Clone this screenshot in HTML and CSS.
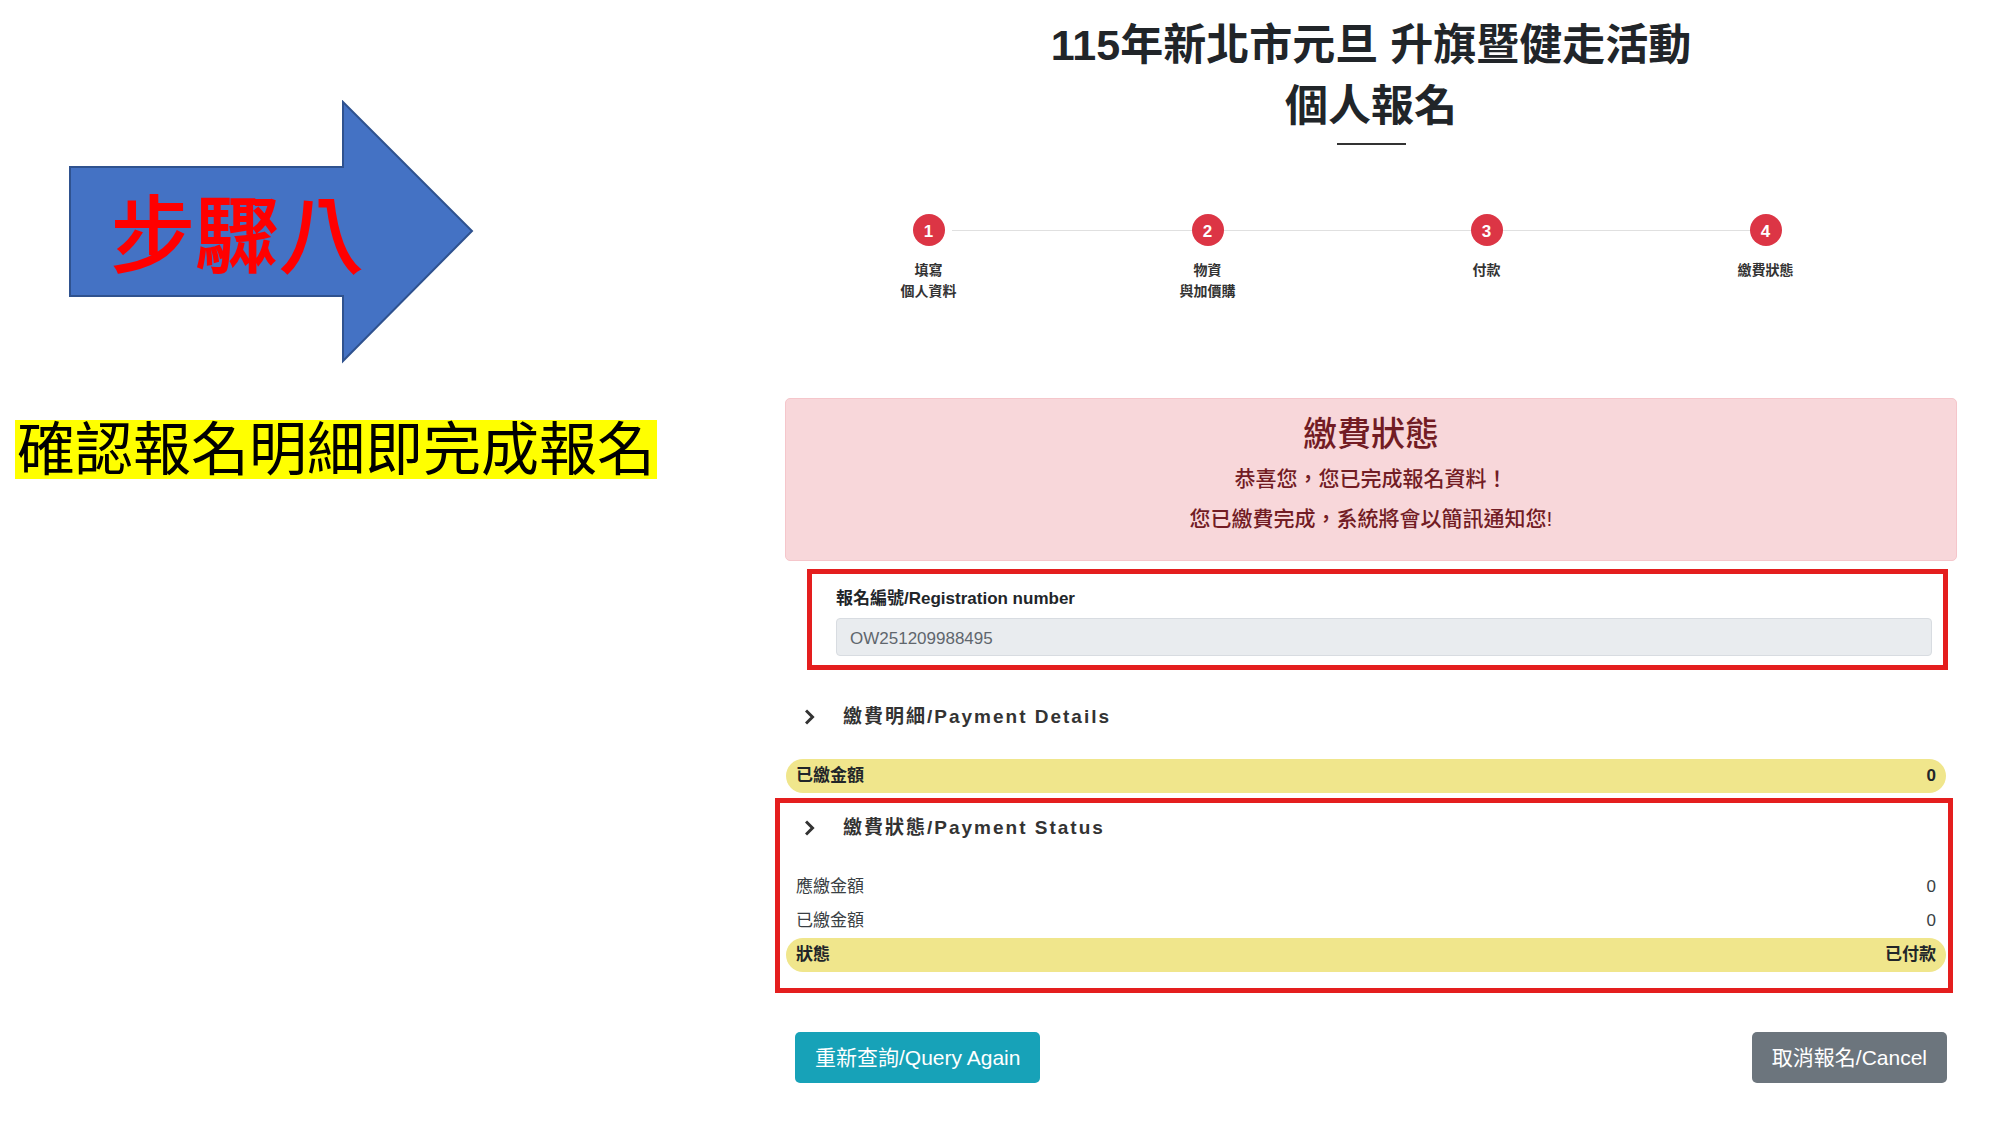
FILE: index.html
```html
<!DOCTYPE html>
<html lang="zh-Hant">
<head>
  <meta charset="UTF-8">
  <meta name="viewport" content="width=device-width, initial-scale=1">
  <title>115年新北市元旦 升旗暨健走活動</title>
  <link rel="stylesheet" href="styles.css">
</head>
<body>

<div class="page">
  <aside class="guide">
    <svg class="arrow" viewBox="0 0 406 264" width="406" height="264">
      <path d="M2 67H275V2L404 131L275 261V196H2Z" fill="#4472c4" stroke="#2f528f" stroke-width="2"/>
      <text x="169" y="166" text-anchor="middle">步驟八</text>
    </svg>
    <p class="note"><mark>確認報名明細即完成報名</mark></p>
  </aside>

  <main class="content">
    <h1 class="title">115年新北市元旦 升旗暨健走活動<br>個人報名</h1>

    <ol class="steps">
      <li><span class="num">1</span>填寫<br>個人資料</li>
      <li><span class="num">2</span>物資<br>與加價購</li>
      <li><span class="num">3</span>付款</li>
      <li><span class="num">4</span>繳費狀態</li>
    </ol>

    <div class="alert">
      <h2>繳費狀態</h2>
      <p>恭喜您，您已完成報名資料！</p>
      <p>您已繳費完成，系統將會以簡訊通知您!</p>
    </div>

    <div class="reg-box">
      <label for="regNo">報名編號/Registration number</label>
      <input type="text" id="regNo" value="OW251209988495" readonly>
    </div>

    <section class="details">
      <h3>
        <button type="button" class="toggle">
          <svg width="10" height="16" viewBox="0 0 10 16"><path d="M1 1.5L7.5 8L1 14.5" fill="none" stroke="#333" stroke-width="3"/></svg>
          繳費明細/Payment Details
        </button>
      </h3>
      <table>
        <tr class="total"><th>已繳金額</th><td>0</td></tr>
      </table>
    </section>

    <section class="status-box">
      <h3>
        <button type="button" class="toggle">
          <svg width="10" height="16" viewBox="0 0 10 16"><path d="M1 1.5L7.5 8L1 14.5" fill="none" stroke="#333" stroke-width="3"/></svg>
          繳費狀態/Payment Status
        </button>
      </h3>
      <table>
        <tr><th>應繳金額</th><td>0</td></tr>
        <tr><th>已繳金額</th><td>0</td></tr>
        <tr class="total"><th>狀態</th><td>已付款</td></tr>
      </table>
    </section>

    <div class="actions">
      <button type="button" class="btn btn-info">重新查詢/Query Again</button>
      <button type="button" class="btn btn-secondary">取消報名/Cancel</button>
    </div>
  </main>
</div>

</body>
</html>
```
FILE: styles.css
```css
* {
  box-sizing: border-box;
}

body {
  margin: 0;
  background: #fff;
  color: #212529;
  font-family: "Liberation Sans", Arial, "Noto Sans CJK TC", sans-serif;
  font-size: 17px;
}

h1, h2, h3, p {
  margin: 0;
}

.page {
  display: grid;
  grid-template-columns: 31fr 49fr;
}

/* left side: step arrow and note */
.guide {
  padding-top: 100px;
}

.arrow {
  display: block;
  margin-left: 68px;
}

.arrow text {
  fill: #f00;
  stroke: #f00;
  stroke-width: 2px;
  font-family: "DFKai-SB", "BiauKai", "Noto Sans CJK TC", serif;
  font-size: 84px;
}

.note {
  margin: 56px 0 0 15px;
  font-family: "DFKai-SB", "BiauKai", "Noto Sans CJK TC", serif;
  font-size: 58px;
  line-height: 51px;
}

.note mark {
  display: inline-block;
  padding: 0 2px 8px;
  background: #ff0;
  color: #000;
}

/* right side: registration page */
.content {
  padding: 15px 43px 40px 0;
}

.title {
  margin-left: 10px;
  font-size: 43px;
  line-height: 61px;
  text-align: center;
}

.title::after {
  content: "";
  display: block;
  width: 69px;
  height: 2px;
  margin: 6px auto 0;
  background: #333;
}

.steps {
  display: grid;
  grid-template-columns: repeat(4, 1fr);
  margin: 69px 52px 95px 14px;
  padding: 0;
  list-style: none;
}

.steps li {
  position: relative;
  color: #333;
  font-size: 14px;
  font-weight: bold;
  line-height: 21px;
  text-align: center;
}

.steps li::after {
  content: "";
  position: absolute;
  top: 16px;
  left: 50%;
  width: 100%;
  height: 1px;
  background: #e0e0e0;
}

.steps li:first-child::after {
  left: calc(50% + 23px);
  width: calc(100% - 23px);
}

.steps li:last-child::after {
  display: none;
}

.num {
  position: relative;
  z-index: 1;
  display: block;
  width: 32px;
  height: 32px;
  margin: 0 auto 14px;
  border-radius: 50%;
  background: #dc3545;
  color: #fff;
  font-size: 17px;
  line-height: 36px;
}

.alert {
  margin: 96px 0 0 10px;
  padding: 14px 20px 25px;
  border: 1px solid #f5c6cb;
  border-radius: 5px;
  background: #f8d7da;
  color: #721c24;
  text-align: center;
}

.alert h2 {
  font-size: 34px;
  font-weight: 500;
  line-height: 42px;
}

.alert p {
  margin-top: 8px;
  font-size: 21px;
  font-weight: 500;
  line-height: 32px;
}

.reg-box {
  margin: 8px 9px 0 32px;
  padding: 12px 11px 9px 24px;
  border: 5px solid #e41e1e;
}

.reg-box label {
  display: block;
  margin-bottom: 6px;
  font-weight: bold;
  line-height: 26px;
}

.reg-box input {
  display: block;
  width: 100%;
  height: 38px;
  padding: 3px 13px 0;
  border: 1px solid #d8dce1;
  border-radius: 4px;
  background: #e9ecef;
  color: #5f666d;
  font: inherit;
}

.details {
  padding: 32px 11px 5px;
}

.status-box {
  margin-right: 4px;
  padding: 10px 2px 16px 6px;
  border: 5px solid #e41e1e;
}

.toggle {
  display: flex;
  align-items: center;
  gap: 28px;
  margin-bottom: 27px;
  padding: 0 0 0 19px;
  border: 0;
  background: none;
  color: #333;
  font-family: inherit;
  font-size: 19px;
  font-weight: bold;
  letter-spacing: 2px;
  line-height: 30px;
  cursor: pointer;
}

table {
  width: 100%;
  border-spacing: 0;
  line-height: 34px;
}

th, td {
  padding: 0 10px;
  color: #3a3f44;
  font-weight: normal;
}

th {
  text-align: left;
}

td {
  text-align: right;
}

.total th, .total td {
  background: #f0e68c;
  color: #212529;
  font-weight: bold;
}

.total th {
  border-radius: 17px 0 0 17px;
}

.total td {
  border-radius: 0 17px 17px 0;
}

.actions {
  display: flex;
  justify-content: space-between;
  margin: 39px 10px 0 20px;
}

.btn {
  height: 51px;
  padding: 0 20px 4px;
  border: 0;
  border-radius: 5px;
  color: #fff;
  font-family: inherit;
  font-size: 21px;
  cursor: pointer;
}

.btn-info {
  background: #17a2b8;
}

.btn-secondary {
  background: #6c757d;
}
```
